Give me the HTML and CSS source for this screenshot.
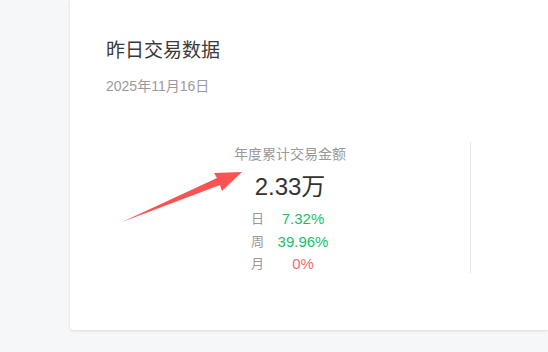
FILE: index.html
```html
<!DOCTYPE html>
<html lang="zh-CN">
<head>
    <meta charset="UTF-8">
    <meta name="viewport" content="width=device-width, initial-scale=1.0">
    <title>昨日交易数据</title>
    <link rel="stylesheet" href="styles.css">
</head>
<body>
    <div class="page">
        <div class="card">
            <h2 class="card-title">昨日交易数据</h2>
            <div class="card-date">2025年11月16日</div>

            <div class="stats">
                <div class="stat">
                    <div class="stat-label">年度累计交易金额</div>
                    <div class="stat-value">2.33万</div>
                    <div class="stat-rates">
                        <span class="rate-name">日</span>
                        <span class="rate up">7.32%</span>
                        <span class="rate-name">周</span>
                        <span class="rate up">39.96%</span>
                        <span class="rate-name">月</span>
                        <span class="rate down">0%</span>
                    </div>
                </div>
            </div>

            <!-- 标注箭头 -->
            <svg class="arrow" width="140" height="70" viewBox="0 0 140 70">
                <polygon points="2,52 97,8 94,3 122,2 102,21 100,15" fill="#f95353"/>
            </svg>
        </div>
    </div>
</body>
</html>
```

FILE: styles.css
```css
* {
    margin: 0;
    padding: 0;
    box-sizing: border-box;
    font-family: "Liberation Sans", "Noto Sans CJK SC", sans-serif;
}

body {
    background-color: #f6f7f9;
    overflow: hidden;
}

.page {
    padding-left: 70px;
    height: 352px;
}

.card {
    position: relative;
    width: 478px;
    height: 330px;
    background-color: #ffffff;
    border-radius: 0 0 0 4px;
    box-shadow: 0 1px 3px rgba(0,0,0,0.12);
    padding: 38px 0 0 36px;
}

.card-title {
    font-size: 19px;
    font-weight: normal;
    line-height: 26px;
    color: #3a3a3a;
}

.card-date {
    margin-top: 12px;
    font-size: 14px;
    line-height: 20px;
    color: #9a9a9a;
}

.stats {
    display: flex;
    margin-top: 46px;
}

.stat {
    width: 365px;
    display: flex;
    flex-direction: column;
    align-items: center;
    border-right: 1px solid #e6e6e6;
    padding-left: 4px;
    height: 131px;
}

.stat-label {
    font-size: 14px;
    line-height: 24px;
    color: #999999;
}

.stat-value {
    margin-top: 4px;
    font-size: 24px;
    line-height: 34px;
    color: #333333;
}

.stat-rates {
    margin-top: 4px;
    display: grid;
    grid-template-columns: 12px 52px;
    column-gap: 14px;
    font-size: 15px;
    line-height: 22.5px;
}

.rate-name {
    color: #999999;
    font-size: 13px;
}

.rate {
    text-align: center;
}

.up {
    color: #19be6b;
}

.down {
    color: #f06a6a;
}

.arrow {
    position: absolute;
    left: 50px;
    top: 170px;
}
```
